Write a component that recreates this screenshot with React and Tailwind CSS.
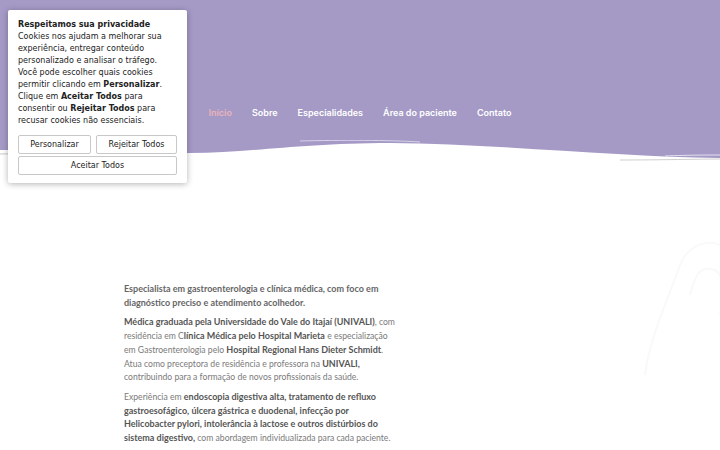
export default function App() {
  const nav = ["Sobre", "Especialidades", "Área do paciente", "Contato"];
  const B = ({ children }) => <b className="font-bold text-[#555] text-[9px] leading-[13.7px]">{children}</b>;
  return (
    <div className="relative w-[720px] h-[450px] overflow-hidden bg-white">
      {/* header */}
      <div className="h-[140px] bg-[#a59ac6] flex flex-col">
        <div className="h-[106px]" />
        <nav className="flex justify-center gap-[20px] text-[9px] font-semibold text-white" style={{ fontFamily: "Inter, 'Liberation Sans', sans-serif" }}>
          <span className="text-[#e9b3b8]">Início</span>
          {nav.map((n) => (
            <span key={n}>{n}</span>
          ))}
        </nav>
      </div>
      <svg width="720" height="22" viewBox="0 0 720 22" className="block">
        <path d="M0,0 H720 V18 C620,17 500,4 390,3 C300,3 250,13 190,13 C110,13 40,10 0,10 Z" fill="#a59ac6" />
        <path d="M300,1 C340,0 390,0 420,2" stroke="#d8d2ea" strokeWidth="1" fill="none" />
        <path d="M0,14 C40,13 90,13 135,12" stroke="#c9c9c9" strokeWidth="1" fill="none" />
        <path d="M620,20 C660,20 700,19 720,19" stroke="#cfcfcf" strokeWidth="1" fill="none" />
        <path d="M665,16 C690,15 710,15 720,15" stroke="#e7e3f2" strokeWidth="1" fill="none" />
      </svg>

      {/* faint watermark */}
      <svg width="90" height="140" viewBox="0 0 90 140" className="absolute left-[640px] top-[235px]">
        <path d="M5,140 C10,100 30,60 40,30 C50,5 80,0 90,20" stroke="#f9f9f9" strokeWidth="2" fill="none" />
        <path d="M50,60 C55,40 60,30 75,35 C85,40 85,60 80,80" stroke="#f9f9f9" strokeWidth="2" fill="none" />
      </svg>

      {/* main text */}
      <div className="w-[274px] ml-[124px] mt-[120px] text-[8.65px] leading-[13.7px] text-[#7a7a7a]" style={{ fontFamily: "Lato, 'Noto Sans', sans-serif" }}>
        <p className="font-bold text-[#666] text-[9px]">
          Especialista em gastroenterologia e clínica médica, com foco em diagnóstico preciso e atendimento acolhedor.
        </p>
        <p className="mt-[6px]">
          <B>Médica graduada pela Universidade do Vale do Itajaí (UNIVALI)</B>, com residência em C<B>línica Médica pelo Hospital Marieta</B> e especialização em Gastroenterologia pelo <B>Hospital Regional Hans Dieter Schmidt</B>. Atua como preceptora de residência e professora na <B>UNIVALI,</B> contribuindo para a formação de novos profissionais da saúde.
        </p>
        <p className="mt-[6px]">
          Experiência em <B>endoscopia digestiva alta, tratamento de refluxo gastroesofágico, úlcera gástrica e duodenal, infecção por Helicobacter pylori, intolerância à lactose e outros distúrbios do sistema digestivo,</B> com abordagem individualizada para cada paciente.
        </p>
      </div>

      {/* cookie popup */}
      <div className="absolute left-[8px] top-[10px] w-[179px] bg-white rounded-[2px] shadow-[0_1px_6px_rgba(0,0,0,0.3)] px-[10px] pt-[9px] pb-[8px] text-[8px] leading-[12px] text-[#222]" style={{ fontFamily: "'DejaVu Sans', sans-serif" }}>
        <div className="font-bold">Respeitamos sua privacidade</div>
        <div>
          Cookies nos ajudam a melhorar sua experiência, entregar conteúdo personalizado e analisar o tráfego. Você pode escolher quais cookies permitir clicando em <b>Personalizar</b>. Clique em <b>Aceitar Todos</b> para consentir ou <b>Rejeitar Todos</b> para recusar cookies não essenciais.
        </div>
        <div className="mt-[8px] flex flex-col gap-[2px]">
          <div className="flex gap-[5px]">
            <button className="w-[73px] h-[19px] border border-[#c8c8c8] rounded-[2px] text-[8px]">Personalizar</button>
            <button className="flex-1 h-[19px] border border-[#c8c8c8] rounded-[2px] text-[8px]">Rejeitar Todos</button>
          </div>
          <button className="w-full h-[19px] border border-[#c8c8c8] rounded-[2px] text-[8px]">Aceitar Todos</button>
        </div>
      </div>
    </div>
  );
}
